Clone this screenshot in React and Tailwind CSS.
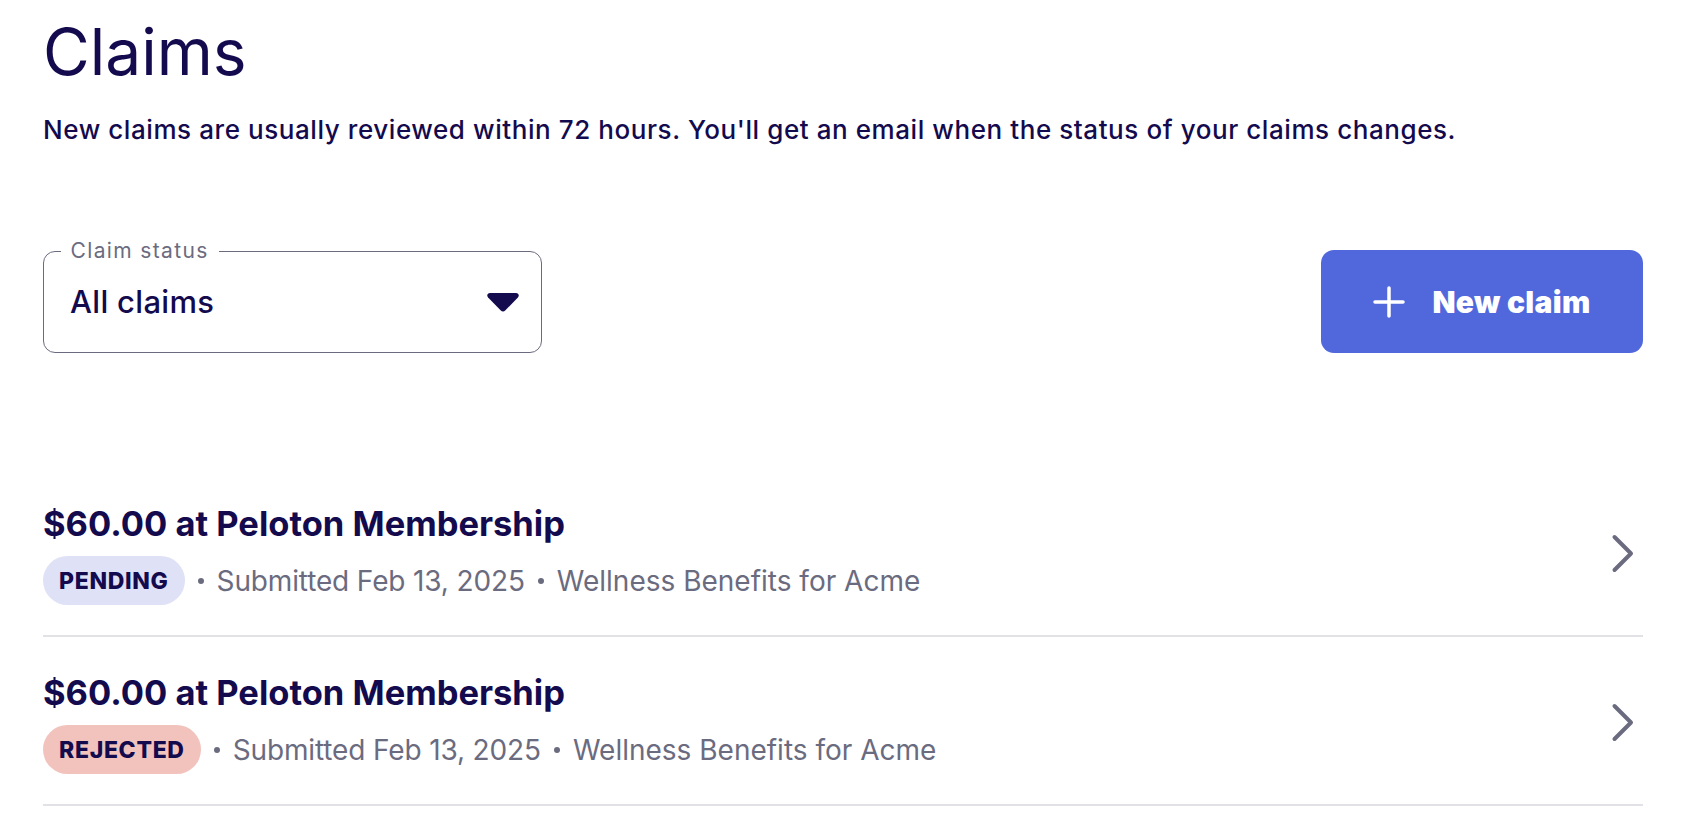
import React from "react";

const claims = [
  { status: "PENDING", badge: "bg-[#dfe1f7]" },
  { status: "REJECTED", badge: "bg-[#f2c3bd]" },
];

function Chevron() {
  return (
    <svg width="24" height="40" viewBox="0 0 24 40" fill="none" className="shrink-0">
      <polyline points="3.5,3 20,19.5 3.5,36" stroke="#6b6b80" strokeWidth="4" strokeLinecap="round" strokeLinejoin="round" />
    </svg>
  );
}

function Row({ status, badge }) {
  return (
    <div className="flex items-center justify-between border-b-2 border-[#e2e2e6] pt-[34px] pb-[30px] pr-[8px]">
      <div className="flex flex-col gap-[10px]">
        <div className="text-[34.5px] leading-[44px] font-bold text-[#140a4e]">$60.00 at Peloton Membership</div>
        <div className="flex items-center gap-[13px] text-[28px] leading-[36px] text-[#6b6b80]">
          <span className={`${badge} rounded-full h-[49px] px-[16px] flex items-center text-[23px] font-extrabold tracking-[0.03em] text-[#140a4e]`}>
            {status}
          </span>
          <span className="w-[6px] h-[6px] rounded-full bg-[#6b6b80]" />
          <span className="tracking-[-0.005em]">Submitted Feb 13, 2025</span>
          <span className="w-[6px] h-[6px] rounded-full bg-[#6b6b80]" />
          <span>Wellness Benefits for Acme</span>
        </div>
      </div>
      <Chevron />
    </div>
  );
}

export default function App() {
  return (
    <div className="min-h-screen bg-white" style={{ fontFamily: "Inter, 'Noto Sans', sans-serif" }}>
      <div className="w-[1600px] ml-[43px] pt-[20px]">
        <h1 className="text-[64px] leading-[64px] font-normal text-[#140a4e]">Claims</h1>
        <p className="mt-[30px] text-[26px] leading-[32px] font-medium tracking-[0.022em] text-[#140a4e]">
          New claims are usually reviewed within 72 hours. You'll get an email when the status of your claims changes.
        </p>

        <div className="mt-[104px] flex items-start justify-between">
          <div className="relative mt-[1px] w-[499px] h-[102px] border-[1.5px] border-[#6b6b80] rounded-[12px] flex items-center justify-between pl-[26px] pr-[22px]">
            <span className="absolute left-[16.5px] top-[-12px] bg-white px-[10px] text-[21px] leading-[22px] tracking-[0.065em] text-[#6b6b80]">
              Claim status
            </span>
            <span className="text-[31px] leading-[36px] font-medium tracking-[0.01em] text-[#140a4e]">All claims</span>
            <svg width="32" height="19" viewBox="0 0 32 19" className="shrink-0">
              <path d="M3 0 H29 C31.5 0 32.6 2.6 30.9 4.4 L18.2 17.6 C17 18.8 15 18.8 13.8 17.6 L1.1 4.4 C-0.6 2.6 0.5 0 3 0 Z" fill="#140a4e" />
            </svg>
          </div>
          <button className="w-[322px] h-[103px] rounded-[13px] bg-[#5168dd] flex items-center justify-center gap-[27px] text-white">
            <svg width="32" height="32" viewBox="0 0 32 32" fill="none">
              <path d="M16 2 V30 M2 16 H30" stroke="white" strokeWidth="3.5" strokeLinecap="round" />
            </svg>
            <span className="text-[30px] leading-[36px] font-black tracking-[0.01em]">New claim</span>
          </button>
        </div>

        <div className="mt-[115px]">
          {claims.map((c) => (
            <Row key={c.status} {...c} />
          ))}
        </div>
      </div>
    </div>
  );
}
